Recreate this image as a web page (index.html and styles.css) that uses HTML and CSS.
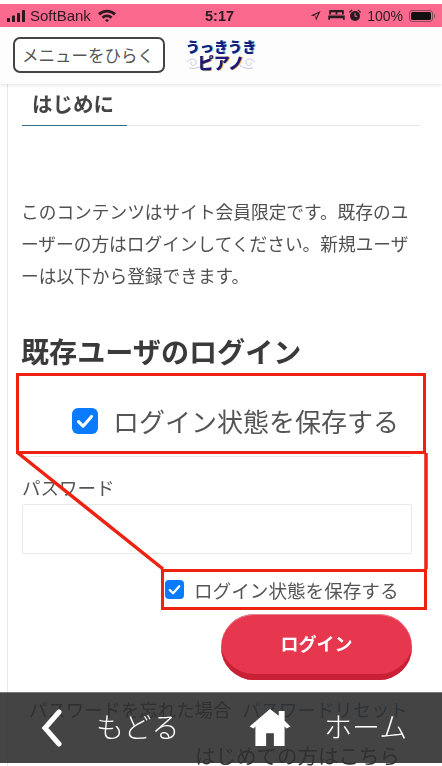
FILE: index.html
```
<!DOCTYPE html>
<html lang="ja">
<head>
<meta charset="utf-8">
<title>ログイン</title>
<link rel="stylesheet" href="styles.css">
</head>
<body>
<div class="page">
  <div class="status">
    <div class="status-side">
      <svg class="ic-signal" viewBox="0 0 18 12"><rect x="0" y="8" width="3" height="4" rx=".6"/><rect x="5" y="5.5" width="3" height="6.5" rx=".6"/><rect x="10" y="3" width="3" height="9" rx=".6"/><rect x="15" y="0" width="3" height="12" rx=".6"/></svg>
      <span>SoftBank</span>
      <svg class="ic-wifi" viewBox="0 0 18 13"><path d="M0 4.3A13 13 0 0 1 18 4.3L16 6.4A10 10 0 0 0 2 6.4Z"/><path d="M3.5 7.8A8 8 0 0 1 14.5 7.8L12.5 9.8A5 5 0 0 0 5.5 9.8Z"/><path d="M7 11.2A3 3 0 0 1 11 11.2L9 13Z"/></svg>
    </div>
    <div class="status-time">5:17</div>
    <div class="status-side status-right">
      <svg class="ic-loc" viewBox="0 0 12 12"><path d="M11.5.5 .8 5.4l4.9.9.9 4.9ZM9 3 6.6 8 6.2 5.8 4 5.4Z" fill-rule="evenodd"/></svg>
      <svg class="ic-bed" viewBox="0 0 18 12"><path d="M2 0h14a1 1 0 0 1 1 1v4H1V1a1 1 0 0 1 1-1ZM0 6h18v4.5h-2V9H2v1.500H0Z"/><rect x="3" y="2.500" width="5" height="2.500" fill="#fb6a8e"/><rect x="10" y="2.500" width="5" height="2.500" fill="#fb6a8e"/></svg>
      <svg class="ic-alarm" viewBox="0 0 12 13"><circle cx="6" cy="7" r="5"/><path d="M0 2.800 2.800 .4 3.600 1.300 .9 3.900ZM12 2.800 9.200 .4 8.400 1.300 11.100 3.900Z"/><path d="M6 4v3.300h2.300" fill="none" stroke="#fb6a8e"/></svg>
      <span class="battery-text">100%</span>
      <div class="battery"><div class="battery-fill"></div></div>
    </div>
  </div>

  <header class="topbar">
    <button class="menu-btn">メニューをひらく</button>
    <div class="logo">
      <svg class="logo-swirl" viewBox="0 0 72 32"><path d="M2 22c5-5 10-3 9 1s-6 3-5-1M70 22c-5-5-10-3-9 1s6 3 5-1M4 28c6 1 10 0 13-3M68 28c-6 1-10 0-13-3" fill="none" stroke="#c9c6e6" stroke-width="1"/></svg>
      <div class="logo-top">うっきうき</div>
      <div class="logo-bottom">ピアノ</div>
    </div>
  </header>

  <main class="content">
    <div class="tabs"><div class="tab">はじめに</div></div>
    <p class="intro">このコンテンツはサイト会員限定です。既存のユーザーの方はログインしてください。新規ユーザーは以下から登録できます。</p>
    <h2 class="login-title">既存ユーザのログイン</h2>
    <input class="field field-email" type="text" aria-label="メールアドレス">
    <label class="field-label">パスワード</label>
    <input class="field" type="password">
    <div class="remember">
      <span class="check check-small"><svg viewBox="0 0 20 20"><path d="M5 10.500 8.500 14 15 6.500"/></svg></span>
      <span>ログイン状態を保存する</span>
    </div>
    <div class="btn-row"><button class="login-btn">ログイン</button></div>
    <p class="forgot">パスワードを忘れた場合<a class="link">パスワードリセット</a></p>
    <p class="first">はじめての方はこちら</p>
  </main>

  <svg class="annot-lines" viewBox="0 0 442 766"><path d="M426 453V569M18 453 163 569"/></svg>
  <div class="annot-big">
    <span class="check check-big"><svg viewBox="0 0 20 20"><path d="M5 10.500 8.500 14 15 6.500"/></svg></span>
    <span>ログイン状態を保存する</span>
  </div>
  <div class="annot-small"></div>

  <nav class="bottom-bar">
    <svg class="ic-back" viewBox="0 0 22 38"><path d="M18 3 4 19 18 35"/></svg>
    <span class="back-text">もどる</span>
    <svg class="ic-home" viewBox="0 0 42 38"><path d="M21 0 30 7V2H36V12L42 18 38 20 36 18V38H25V25H17V38H6V18L4 20 0 18Z"/></svg>
    <span class="home-text">ホーム</span>
  </nav>
</div>
</body>
</html>
```
FILE: styles.css
```
* { box-sizing: border-box; }
html, body { margin: 0; padding: 0; background: #fff; }
.page {
  position: relative;
  width: 442px;
  height: 766px;
  overflow: hidden;
  padding-top: 4px;
  font-family: "Noto Sans CJK JP", "Noto Sans", sans-serif;
  color: #444;
  filter: blur(.35px);
}
.status {
  height: 23px;
  background: #fb6a8e;
  display: flex;
  align-items: center;
  justify-content: space-between;
  padding: 0 9px 0 7px;
  font-family: "Liberation Sans", sans-serif;
  font-size: 15px;
  color: #2a1a22;
  position: relative;
}
.status-side { display: flex; align-items: center; gap: 5px; }
.status-side svg { fill: #2a1a22; display: block; }
.status-time { position: absolute; left: 205px; font-weight: 700; font-size: 14.500px; }
.ic-signal { width: 18px; height: 12px; }
.ic-wifi { width: 18px; height: 13px; margin-left: 2px; }
.status-right { gap: 0; }
.ic-loc { width: 11px; height: 12px; margin-right: 7px; }
.ic-bed { width: 17px; height: 11px; margin-right: 4px; }
.ic-alarm { width: 12px; height: 13px; margin-right: 6px; }
.battery-text { font-size: 14px; }
.battery {
  width: 24px;
  height: 12px;
  margin-left: 6px;
  border: 1px solid #8c4a60;
  border-radius: 3px;
  padding: 1px;
  position: relative;
}
.battery::after {
  content: "";
  position: absolute;
  right: -3px;
  top: 3px;
  width: 1px;
  height: 4px;
  background: #8c4a60;
}
.battery-fill { width: 100%; height: 100%; background: #111; border-radius: 1.5px; }
.topbar {
  height: 57px;
  background: #fdfdfd;
  box-shadow: 0 1px 4px rgba(0,0,0,.12);
  display: flex;
  align-items: center;
  padding: 0 0 1px 13px;
  position: relative;
  z-index: 1;
}
.menu-btn {
  width: 152px;
  height: 36px;
  border: 2px solid #444;
  border-radius: 7px;
  background: #fff;
  color: #555;
  font: 400 16.500px "Noto Sans CJK JP", sans-serif;
  padding: 0 2px 0 0;
  white-space: nowrap;
}
.logo {
  position: relative;
  margin-left: 20px;
  width: 72px;
  height: 32px;
  text-align: center;
  font-weight: 900;
  color: #1c1a78;
  line-height: 1;
  white-space: nowrap;
}
.logo-swirl { position: absolute; left: 0; top: 1px; width: 72px; height: 32px; }
.logo-top { position: relative; font-size: 14px; height: 16px; text-shadow: 1px 0 0 #33b9d6; letter-spacing: .2px; }
.logo-bottom { position: relative; font-size: 16px; margin-top: -1px; text-shadow: 1px 0 0 #f0a030; }
.content {
  margin-left: 7px;
  border-left: 1px solid #d8ecf4;
  height: 682px;
  padding: 0 0 0 14px;
  width: 413px;
}
.tabs {
  height: 42px;
  border-bottom: 1px solid #e2e4e6;
}
.tab {
  width: 105px;
  height: 42px;
  padding: 4px 0 0 10px;
  border-bottom: 1px solid #2f6f8a;
  font-size: 20.500px;
  font-weight: 700;
  line-height: 30px;
  color: #444;
}
.intro {
  margin: 69px 0 0 -1px;
  width: 393px;
  font-size: 17.700px;
  line-height: 32px;
  color: #505050;
  word-break: break-all;
}
.login-title {
  margin: 40px 0 0 -1px;
  font-size: 28.100px;
  line-height: 40px;
  font-weight: 700;
  color: #3a3a3a;
  white-space: nowrap;
}
.field {
  display: block;
  width: 390px;
  height: 50px;
  border: 1px solid #e8e8e8;
  border-radius: 2px;
  background: #fff;
}
.field-email { margin-top: 38px; height: 48px; }
.field-label {
  display: block;
  margin-top: 14px;
  height: 33px;
  font-size: 18.500px;
  line-height: 32px;
  color: #555;
}
.remember {
  display: flex;
  align-items: center;
  margin: 24px 0 0 143px;
  height: 22px;
  font-size: 18.600px;
  color: #555;
  white-space: nowrap;
}
.check {
  flex: none;
  display: block;
  background: #0a7bff;
}
.check svg { display: block; width: 100%; height: 100%; fill: none; stroke: #fff; stroke-linecap: round; stroke-linejoin: round; stroke-width: 2.400; }
.check-small { width: 19px; height: 19px; border-radius: 4px; margin-right: 10px; }
.check-big { width: 26px; height: 26px; border-radius: 6px; margin-right: 15px; }
.btn-row { display: flex; justify-content: flex-end; width: 390px; margin-top: 14px; }
.login-btn {
  width: 191px;
  height: 66px;
  border: none;
  border-radius: 33px;
  background: #e6374e;
  box-shadow: inset 0 -7px 0 -1px #c92036, inset 0 1px 0 #ee8090;
  color: #fff;
  font: 700 18px "Noto Sans CJK JP", sans-serif;
  padding: 0 0 8px;
}
.forgot {
  margin: 14px 0 0 7px;
  font-size: 18.400px;
  line-height: 30px;
  color: #333;
  white-space: nowrap;
}
.link { color: #1f4f7f; margin-left: 11px; }
.first {
  margin: 16px 0 0;
  width: 378px;
  text-align: right;
  font-size: 20.500px;
  line-height: 30px;
  color: #333;
}
.annot-lines { position: absolute; left: 0; top: 0; width: 442px; height: 766px; fill: none; stroke: #ee2211; stroke-width: 3.500; pointer-events: none; z-index: 2; }
.annot-big {
  position: absolute;
  left: 16px;
  top: 373px;
  width: 410px;
  height: 81px;
  border: 3.500px solid #ee2211;
  background: #fff;
  display: flex;
  align-items: center;
  padding: 14px 0 0 53px;
  font-size: 26px;
  color: #555;
  white-space: nowrap;
  z-index: 2;
}
.annot-small {
  position: absolute;
  left: 161px;
  top: 569px;
  width: 266px;
  height: 41px;
  border: 3.500px solid #ee2211;
  z-index: 2;
}
.bottom-bar {
  position: absolute;
  left: 0;
  top: 692px;
  width: 442px;
  height: 71px;
  background: rgba(48,48,48,.9);
  border-top: 1px solid #777;
  color: #fff;
  font-size: 28px;
  font-weight: 300;
  display: flex;
  align-items: center;
  z-index: 3;
}
.ic-back { width: 22px; height: 38px; margin: -1px 0 0 41px; fill: none; stroke: #fff; stroke-width: 5; stroke-linecap: round; stroke-linejoin: miter; }
.back-text { margin: -4px 0 0 33px; line-height: 1; width: 90px; }
.ic-home { width: 42px; height: 37px; margin: -1px 0 0 63px; fill: #fff; }
.home-text { margin: -4px 0 0 33px; line-height: 1; }
```
